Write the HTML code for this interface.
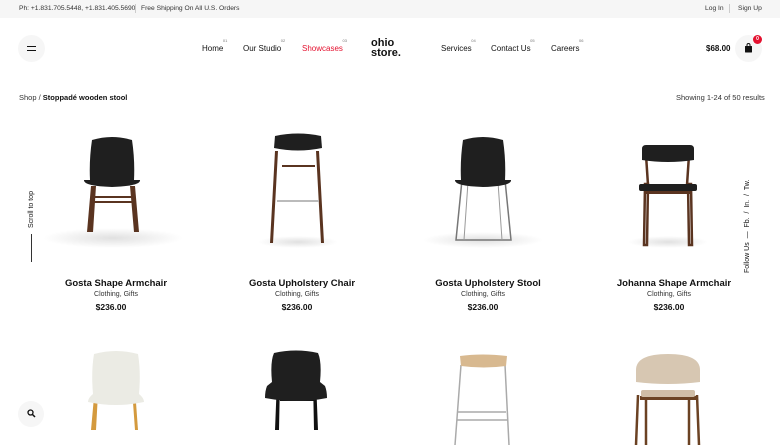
<!DOCTYPE html>
<html><head><meta charset="utf-8"><style>
*{margin:0;padding:0;box-sizing:border-box}
body{width:780px;height:446px;overflow:hidden;background:#fff;font-family:"Liberation Sans",Arial,sans-serif;color:#111;position:relative}
.a{position:absolute;white-space:nowrap}
.top{position:absolute;left:0;top:0;width:780px;height:18px;background:#f6f6f6;font-size:6.7px;color:#333}
.nav{font-size:8px;color:#111}
.nav sup{position:absolute;font-size:4px;color:#777;top:-6px;right:-4px}
.ttl{font-size:9.5px;font-weight:bold;text-align:center;width:180px}
.cat{font-size:7px;color:#333;text-align:center;width:180px}
.pr{font-size:8.5px;font-weight:bold;text-align:center;width:180px}
</style></head><body>
<div class="top">
<span class="a" style="left:19px;top:5px">Ph: +1.831.705.5448, +1.831.405.5690</span>
<span class="a" style="left:135px;top:4px;width:1px;height:9px;background:#ccc"></span>
<span class="a" style="left:141px;top:5px">Free Shipping On All U.S. Orders</span>
<span class="a" style="left:705px;top:5px">Log In</span>
<span class="a" style="left:729px;top:4px;width:1px;height:9px;background:#ccc"></span>
<span class="a" style="left:738px;top:5px">Sign Up</span>
</div>
<div class="a" style="left:18px;top:35px;width:27px;height:27px;border-radius:50%;background:#f6f6f6"></div>
<div class="a" style="left:27px;top:46px;width:9px;height:1.3px;background:#111"></div>
<div class="a" style="left:27px;top:49.5px;width:9px;height:1.3px;background:#111"></div>
<div class="a nav" style="left:202px;top:44px">Home<sup>01</sup></div>
<div class="a nav" style="left:243px;top:44px">Our Studio<sup>02</sup></div>
<div class="a nav" style="left:302px;top:44px;color:#e4112f">Showcases<sup>03</sup></div>
<div class="a" style="left:371px;top:38px;font-size:11px;font-weight:bold;line-height:10px">ohio<br>store.</div>
<div class="a nav" style="left:441px;top:44px">Services<sup>04</sup></div>
<div class="a nav" style="left:491px;top:44px">Contact Us<sup>05</sup></div>
<div class="a nav" style="left:551px;top:44px">Careers<sup>06</sup></div>
<div class="a" style="left:706px;top:44px;font-size:8px;font-weight:bold">$68.00</div>
<div class="a" style="left:735px;top:35px;width:27px;height:27px;border-radius:50%;background:#f6f6f6"></div>
<svg class="a" style="left:744px;top:43px" width="9" height="10"><path d="M3 3V2a1.5 1.5 0 0 1 3 0v1" stroke="#111" fill="none" stroke-width="1"/><rect x="1" y="3" width="7" height="6.5" rx="0.5" fill="#111"/></svg>
<div class="a" style="left:753px;top:35px;width:9px;height:9px;border-radius:50%;background:#e4112f;color:#fff;font-size:5px;text-align:center;line-height:9px;font-weight:bold">0</div>
<div class="a" style="left:19px;top:93px;font-size:7.5px;color:#333">Shop / <b style="color:#111">Stoppadé wooden stool</b></div>
<div class="a" style="left:676px;top:93px;font-size:7.5px;color:#333">Showing 1-24 of 50 results</div>
<div class="a" style="left:28px;top:228px;font-size:7px;transform:rotate(-90deg);transform-origin:0 0">Scroll to top</div>
<div class="a" style="left:31px;top:234px;width:1px;height:28px;background:#333"></div>
<div class="a" style="left:744px;top:273px;font-size:7px;transform:rotate(-90deg);transform-origin:0 0">Follow Us &nbsp;— &nbsp;Fb. &nbsp;/ &nbsp;In. &nbsp;/ &nbsp;Tw.</div>
<div class="a" style="left:18px;top:401px;width:26px;height:26px;border-radius:50%;background:#f6f6f6"></div>
<svg class="a" style="left:27px;top:409px" width="9" height="9"><circle cx="3.5" cy="3.5" r="2.5" stroke="#111" fill="none" stroke-width="1.3"/><path d="M5.5 5.5 8 8" stroke="#111" stroke-width="1.5"/></svg>

<svg class="a" style="left:0;top:120px" width="780" height="326">
<defs><radialGradient id="sh"><stop offset="0" stop-color="#000" stop-opacity=".12"/><stop offset="1" stop-color="#000" stop-opacity="0"/></radialGradient></defs>
<!-- 1 rocking armchair -->
<ellipse cx="113" cy="118" rx="70" ry="10" fill="url(#sh)"/>
<path d="M87 112l4-46h5l-3 46zM134 112l-4-46h5l4 46z" fill="#5a3420"/>
<rect x="92" y="76" width="40" height="2" fill="#5a3420"/><rect x="92" y="81" width="40" height="2" fill="#5a3420"/>
<path d="M92 20q20-6 40 0q3 20 2 40h6q1 6-28 7q-29-1-28-7h6q-1-20 2-40z" fill="#1f1f1f"/>
<!-- 2 stool -->
<ellipse cx="298" cy="122" rx="40" ry="6" fill="url(#sh)"/>
<path d="M275 31l-5 92h3l5-92zM319 31l5 92h-3l-5-92z" fill="#5a3420"/>
<rect x="282" y="45" width="33" height="2" fill="#5a3420"/><rect x="277" y="80" width="42" height="2" fill="#bbb"/>
<path d="M275 16q23-5 46 0l1 12q-24 5-48 0z" fill="#1f1f1f"/>
<!-- 3 sled stool -->
<ellipse cx="483" cy="120" rx="60" ry="8" fill="url(#sh)"/>
<path d="M462 60l-6 60h55l-6-60" stroke="#777" stroke-width="1.5" fill="none"/>
<path d="M468 62l-4 58M498 62l4 58" stroke="#999" stroke-width="1" fill="none"/>
<path d="M463 20q20-6 40 0q3 20 2 40h6q1 6-28 7q-29-1-28-7h6q-1-20 2-40z" fill="#1f1f1f"/>
<!-- 4 johanna -->
<ellipse cx="668" cy="122" rx="40" ry="6" fill="url(#sh)"/>
<path d="M645 64l-1 61h3l1-61zM691 64l1 61h-3l-1-61zM646 35l2 30M689 35l-2 30" stroke="#5a3420" stroke-width="2.5" fill="none"/>
<rect x="646" y="71" width="44" height="3" fill="#5a3420"/>
<path d="M642 29q0-4 4-4h44q4 0 4 4v11q-26 4-52 0z" fill="#1f1f1f"/>
<rect x="639" y="64" width="58" height="7" rx="2" fill="#1f1f1f"/>
<!-- row 2 -->
<path d="M91 310l5-55h3l-3 55zM135 310l-4-55h3l4 55z" fill="#d49a3e"/>
<rect x="96" y="272" width="38" height="2" fill="#d49a3e"/><rect x="96" y="277" width="38" height="2" fill="#d49a3e"/>
<path d="M94 234q22-6 44 0q3 18 1 40q5 4 5 8q-28 6-56 0q0-4 5-8q-2-22 1-40z" fill="#ebebe4"/>
<path d="M275 310l2-50h3l-1 50zM318 310l-2-50h-3l1 50z" fill="#111"/><rect x="280" y="279" width="35" height="2" fill="#111"/>
<path d="M265 278q0-7 2-12l5-4q-2-20 2-29q22-5 44 0q4 9 2 29l5 4q2 5 2 12q-30 6-62 0z" fill="#1f1f1f"/>
<path d="M461 245l-6 80M505 245l4 80M457 300h50M458 292h48" stroke="#aaa" stroke-width="1.5" fill="none"/>
<path d="M460 236q22-3 47 0l-1 10q-22 3-45 0z" fill="#d8b990"/>
<path d="M638 275l-2 50M697 275l2 50M646 270v55M689 270v55" stroke="#6b4223" stroke-width="2.5" fill="none"/>
<rect x="640" y="276" width="56" height="4" fill="#6b4223"/>
<path d="M636 250q0-16 32-16q32 0 32 16v12q-32 4-64 0z" fill="#d7c7b2"/>
<rect x="641" y="270" width="54" height="7" rx="2" fill="#cfbda6"/>
</svg>

<div class="a ttl" style="left:26px;top:278px">Gosta Shape Armchair</div>
<div class="a cat" style="left:26px;top:291px">Clothing, Gifts</div>
<div class="a pr" style="left:21px;top:302px">$236.00</div>
<div class="a ttl" style="left:212px;top:278px">Gosta Upholstery Chair</div>
<div class="a cat" style="left:207px;top:291px">Clothing, Gifts</div>
<div class="a pr" style="left:207px;top:302px">$236.00</div>
<div class="a ttl" style="left:398px;top:278px">Gosta Upholstery Stool</div>
<div class="a cat" style="left:393px;top:291px">Clothing, Gifts</div>
<div class="a pr" style="left:393px;top:302px">$236.00</div>
<div class="a ttl" style="left:584px;top:278px">Johanna Shape Armchair</div>
<div class="a cat" style="left:579px;top:291px">Clothing, Gifts</div>
<div class="a pr" style="left:579px;top:302px">$236.00</div>
</body></html>
